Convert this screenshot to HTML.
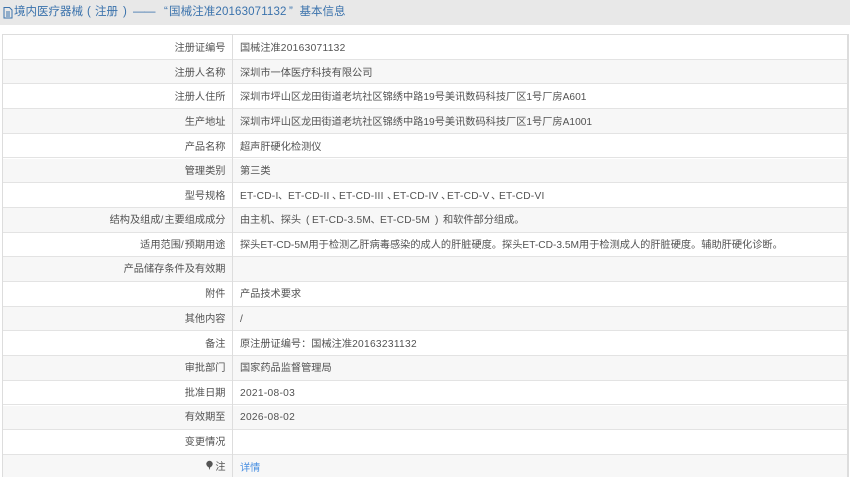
<!DOCTYPE html>
<html lang="zh"><head><meta charset="utf-8">
<style>
html,body{margin:0;padding:0;background:#fff;width:850px;height:477px;overflow:hidden}
body{font-family:"Liberation Sans","Noto Sans CJK SC",sans-serif;font-size:10.2px;color:#525252;position:relative}
#h{position:absolute;left:0;top:0;width:850px;height:25px;background:#e8e8e8;color:#3a72ac;font-size:11.5px;line-height:25px;white-space:nowrap}
#h span{position:absolute;top:0;filter:blur(.3px)}
#h svg{position:absolute;left:3px;top:7px}
#t{position:absolute;left:2px;top:34px;width:847px;height:443px;border-left:1px solid #ddd;border-right:2px solid #ddd;border-top:1.5px solid #ddd;overflow:hidden;box-sizing:border-box}
.r{position:absolute;left:0;width:100%;height:24.7px;border-bottom:1.4px solid #e3e3e3;box-sizing:border-box;line-height:24px}
.r.o{background:#f7f7f7}
.l{position:absolute;left:0;top:1px;width:222.5px;text-align:right;white-space:nowrap;filter:blur(.3px)}
.v{position:absolute;left:237px;top:1px;white-space:nowrap;filter:blur(.3px)}
.u .l,.u .v{top:2px}
.d{letter-spacing:.3px}
.v i{position:absolute;top:0;font-style:normal;letter-spacing:.25px}
#s{position:absolute;left:232px;top:34px;width:1.3px;height:443px;background:#ddd}
a{color:#4a90e2;text-decoration:none}
</style></head><body>
<div id="h"><svg width="10" height="12" viewBox="0 0 10 12"><path d="M1 .5H6.5L9 3V11H1ZM3 5H7M3 7H7M3 9H7" fill="none" stroke="#3a72ac"/></svg>
<span style="left:14px">境内医疗器械</span><span style="left:87px">(</span><span style="left:95px">注册</span><span style="left:123px">)</span><span style="left:133px;letter-spacing:-.5px">——</span><span style="left:164px">“</span><span style="left:169px;letter-spacing:.1px">国械注准<span style="position:static;letter-spacing:.15px">20163071132</span></span><span style="left:289px">”</span><span style="left:299.5px">基本信息</span></div>
<div id="t">
<div class="r u" style="top:0"><div class="l">注册证编号</div><div class="v">国械注准<span class="d">20163071132</span></div></div>
<div class="r o u" style="top:24.7px"><div class="l">注册人名称</div><div class="v">深圳市一体医疗科技有限公司</div></div>
<div class="r u" style="top:49.4px"><div class="l">注册人住所</div><div class="v">深圳市坪山区龙田街道老坑社区锦绣中路19号美讯数码科技厂区1号厂房A601</div></div>
<div class="r o u" style="top:74.1px"><div class="l">生产地址</div><div class="v">深圳市坪山区龙田街道老坑社区锦绣中路19号美讯数码科技厂区1号厂房A1001</div></div>
<div class="r u" style="top:98.8px"><div class="l">产品名称</div><div class="v">超声肝硬化检测仪</div></div>
<div class="r o" style="top:123.5px"><div class="l">管理类别</div><div class="v">第三类</div></div>
<div class="r u" style="top:148.2px"><div class="l">型号规格</div><div class="v"><i style="left:0">ET-CD-I</i><i style="left:38px">、</i><i style="left:48px">ET-CD-II</i><i style="left:92px">、</i><i style="left:99px">ET-CD-III</i><i style="left:147px">、</i><i style="left:153px">ET-CD-IV</i><i style="left:201px">、</i><i style="left:207px">ET-CD-V</i><i style="left:251px">、</i><i style="left:259px">ET-CD-VI</i></div></div>
<div class="r o" style="top:172.9px"><div class="l">结构及组成<span style="letter-spacing:1px">/</span>主要组成成分</div><div class="v">由主机、探头<i style="left:66px">(</i><i style="left:72px">ET-CD-3.5M</i><i style="left:130.5px">、</i><i style="left:140px">ET-CD-5M</i><i style="left:195px">)</i><i style="left:203px;letter-spacing:0">和软件部分组成。</i></div></div>
<div class="r" style="top:197.6px"><div class="l">适用范围<span style="letter-spacing:1px">/</span>预期用途</div><div class="v">探头ET-CD-5M用于检测乙肝病毒感染的成人的肝脏硬度。探头ET-CD-3.5M用于检测成人的肝脏硬度。辅助肝硬化诊断。</div></div>
<div class="r o" style="top:222.3px"><div class="l">产品储存条件及有效期</div></div>
<div class="r" style="top:247px"><div class="l">附件</div><div class="v">产品技术要求</div></div>
<div class="r o" style="top:271.7px"><div class="l">其他内容</div><div class="v">/</div></div>
<div class="r u" style="top:296.4px"><div class="l">备注</div><div class="v">原注册证编号：国械注准<span class="d">20163231132</span></div></div>
<div class="r o" style="top:321.1px"><div class="l">审批部门</div><div class="v">国家药品监督管理局</div></div>
<div class="r" style="top:345.8px"><div class="l">批准日期</div><div class="v d">2021-08-03</div></div>
<div class="r o" style="top:370.5px"><div class="l" style="top:0">有效期至</div><div class="v d" style="top:0">2026-08-02</div></div>
<div class="r" style="top:395.2px"><div class="l">变更情况</div></div>
<div class="r o" style="top:419.9px;height:30px;border:0"><div class="l"><svg width="7" height="11" viewBox="0 0 7 11" style="vertical-align:-1px;margin-right:2px"><circle cx="3.5" cy="4" r="3.2" fill="#555"/><path d="M2.5 6.5H4.5L3.5 10Z" fill="#555"/></svg>注</div><div class="v" style="top:2px"><a>详情</a></div></div>
</div>
<div id="s"></div>
</body></html>
